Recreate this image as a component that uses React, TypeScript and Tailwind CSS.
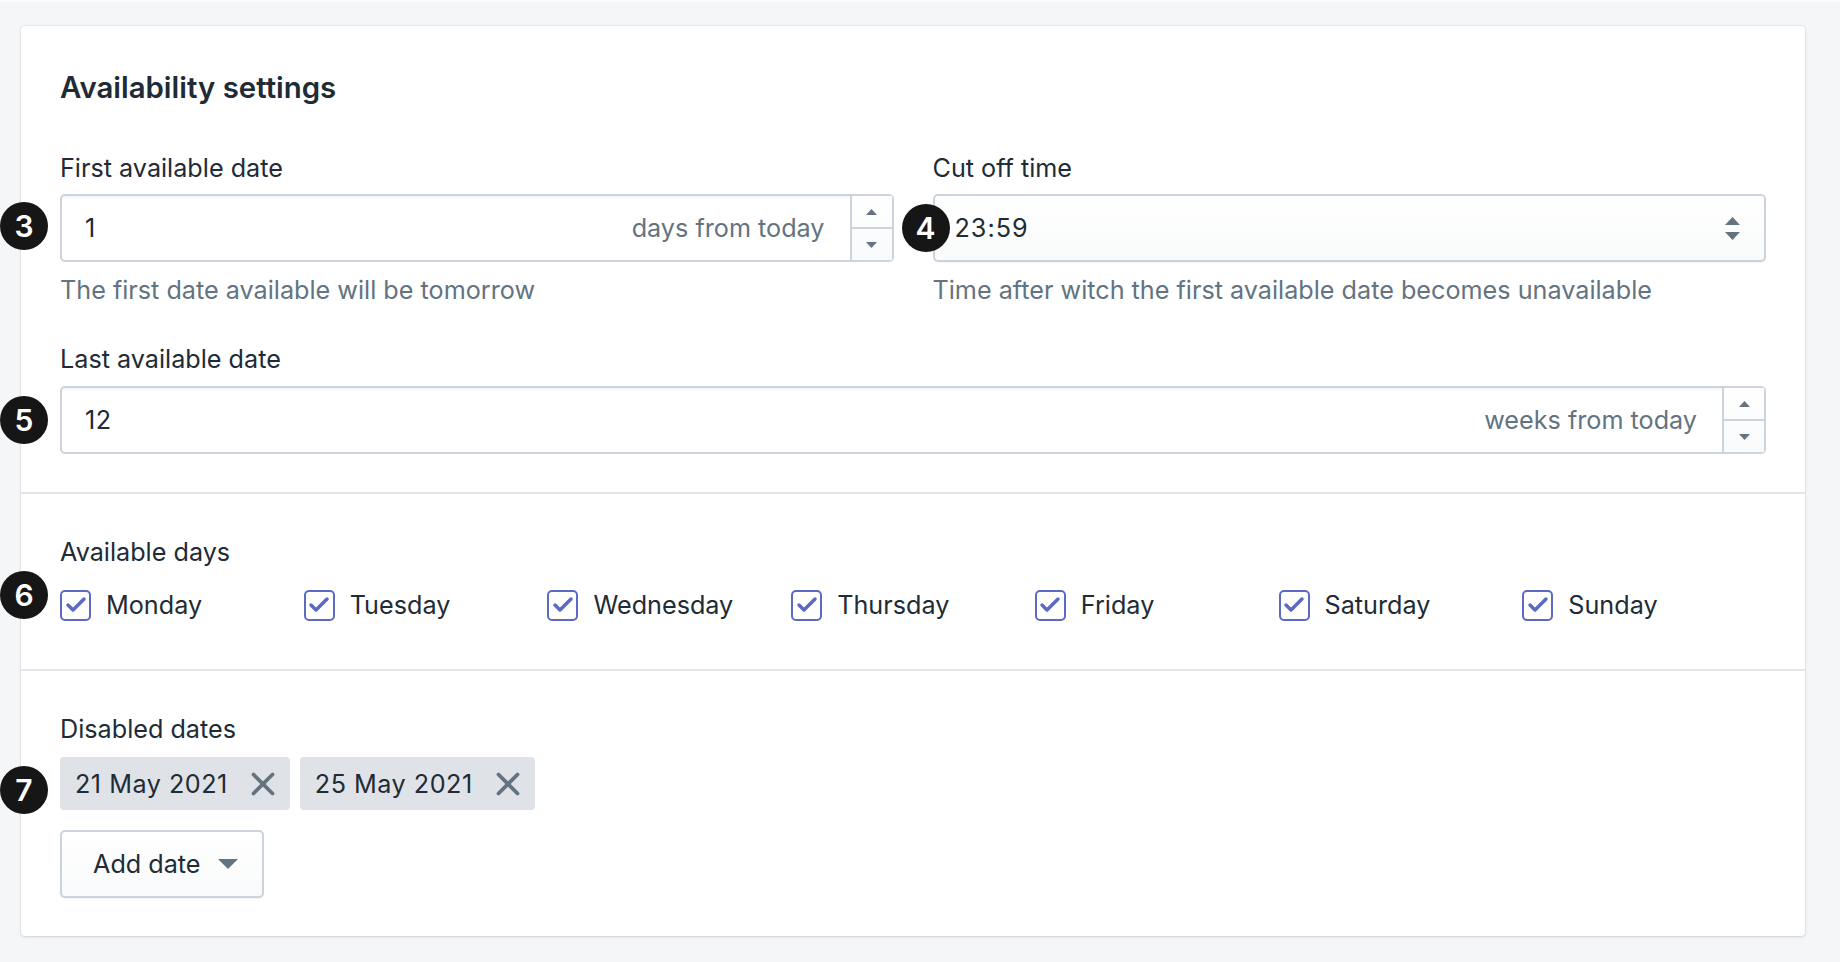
import { Check, X } from 'lucide-react';

const DAYS = ['Monday', 'Tuesday', 'Wednesday', 'Thursday', 'Friday', 'Saturday', 'Sunday'];
const DISABLED_DATES = ['21 May 2021', '25 May 2021'];

const Badge = ({ n, className }: { n: number; className: string }) => (
  <div
    className={`absolute flex h-12 w-12 items-center justify-center rounded-full bg-[#161616] text-[30px] font-semibold text-white ${className}`}
  >
    {n}
  </div>
);

const Arrow = ({ up, className }: { up?: boolean; className: string }) => (
  <svg viewBox="0 0 10 6" preserveAspectRatio="none" className={className} fill="currentColor">
    <path d={up ? 'M5 0 10 6H0Z' : 'M0 0H10L5 6Z'} />
  </svg>
);

const NumberField = ({ value, suffix }: { value: string; suffix: string }) => (
  <div className="flex h-[68px] rounded-[5px] border-2 border-[#cdd3da] bg-white shadow-[inset_0_2px_2px_rgba(99,115,129,0.06)]">
    <div className="flex flex-1 items-center justify-between pl-[23px] pr-[25px]">
      <span className="tracking-[0.6px] text-[#212b36]">{value}</span>
      <span className="text-[#637381]">{suffix}</span>
    </div>
    <div className="flex w-[42px] flex-col border-l-2 border-[#cdd3da] bg-gradient-to-b from-white to-[#f9fafb] text-[#637381]">
      <div className="flex flex-1 items-center justify-center border-b-2 border-[#cdd3da]">
        <Arrow up className="h-[6px] w-[11px]" />
      </div>
      <div className="flex flex-1 items-center justify-center">
        <Arrow className="h-[6px] w-[11px]" />
      </div>
    </div>
  </div>
);

export default function App() {
  return (
    <div className="min-h-screen overflow-hidden border-t-2 border-[#fbfcfc] bg-[#f4f6f8] pb-[26px] pl-[21px] pr-[35px] pt-[24px] font-['Inter',sans-serif] text-[25.2px] leading-[32px] text-[#212b36]">
      <div className="relative h-[910px] rounded-[4px] bg-white shadow-[0_0_0_1px_rgba(63,63,68,0.05),0_1px_3px_0_rgba(63,63,68,0.15)]">
        {/* Main fields */}
        <section className="border-b-2 border-[#e3e6ea] px-[39px] pb-[38px] pt-[46px]">
          <h2 className="text-[29.4px] font-semibold leading-[32px]">Availability settings</h2>

          <div className="mt-[48px] grid grid-cols-2 gap-x-[39px]">
            <div className="relative">
              <label className="mb-[10px] block">First available date</label>
              <NumberField value="1" suffix="days from today" />
              <p className="mt-[12px] text-[#637381]">The first date available will be tomorrow</p>
              <Badge n={3} className="-left-[60px] top-[50px]" />
            </div>

            <div className="relative">
              <label className="mb-[10px] block">Cut off time</label>
              <div className="flex h-[68px] items-center justify-between rounded-[5px] border-2 border-[#cdd3da] bg-gradient-to-b from-white to-[#f9fafb] pl-[20px] pr-[24px] shadow-[0_1px_1px_rgba(22,29,37,0.05)]">
                <span className="tracking-[1px]">23:59</span>
                <div className="flex flex-col gap-[7px] text-[#637381]">
                  <Arrow up className="h-[8px] w-[15px]" />
                  <Arrow className="h-[8px] w-[15px]" />
                </div>
              </div>
              <p className="mt-[12px] text-[#637381]">Time after witch the first available date becomes unavailable</p>
              <Badge n={4} className="-left-[31px] top-[52px]" />
            </div>
          </div>

          <div className="relative mt-[37px]">
            <label className="mb-[11px] block">Last available date</label>
            <NumberField value="12" suffix="weeks from today" />
            <Badge n={5} className="-left-[60px] top-[53px]" />
          </div>
        </section>

        {/* Available days */}
        <section className="border-b-2 border-[#e3e6ea] px-[39px] pb-[48px] pt-[42px]">
          <div className="relative">
            <div className="mb-[21px]">Available days</div>
            <div className="grid grid-cols-7">
              {DAYS.map((day) => (
                <div key={day} className="flex items-center gap-[15px]">
                  <div className="flex h-[31px] w-[31px] items-center justify-center rounded-[5px] border-2 border-[#5c6ac4]">
                    <Check size={24} strokeWidth={3.5} className="text-[#5c6ac4]" />
                  </div>
                  <span>{day}</span>
                </div>
              ))}
            </div>
            <Badge n={6} className="-left-[60px] top-[35px]" />
          </div>
        </section>

        {/* Disabled dates */}
        <section className="px-[39px] pt-[42px]">
          <div className="relative">
            <div className="mb-[12px]">Disabled dates</div>
            <div className="flex gap-[10px]">
              {DISABLED_DATES.map((date) => (
                <div key={date} className="flex h-[53px] items-center gap-[16px] rounded-[4px] bg-[#dfe3e8] pl-[15px] pr-[8px]">
                  <span className="tracking-[0.5px]">{date}</span>
                  <X size={38} strokeWidth={2.4} className="text-[#637381]" />
                </div>
              ))}
            </div>
            <Badge n={7} className="-left-[60px] top-[53px]" />
            <button className="mt-[20px] flex h-[68px] w-[204px] items-center gap-[17px] rounded-[5px] border-2 border-[#cdd3da] bg-gradient-to-b from-white to-[#f9fafb] pl-[31px] shadow-[0_1px_1px_rgba(22,29,37,0.05)]">
              Add date
              <Arrow className="h-[10px] w-[20px] text-[#637381]" />
            </button>
          </div>
        </section>
      </div>
    </div>
  );
}
